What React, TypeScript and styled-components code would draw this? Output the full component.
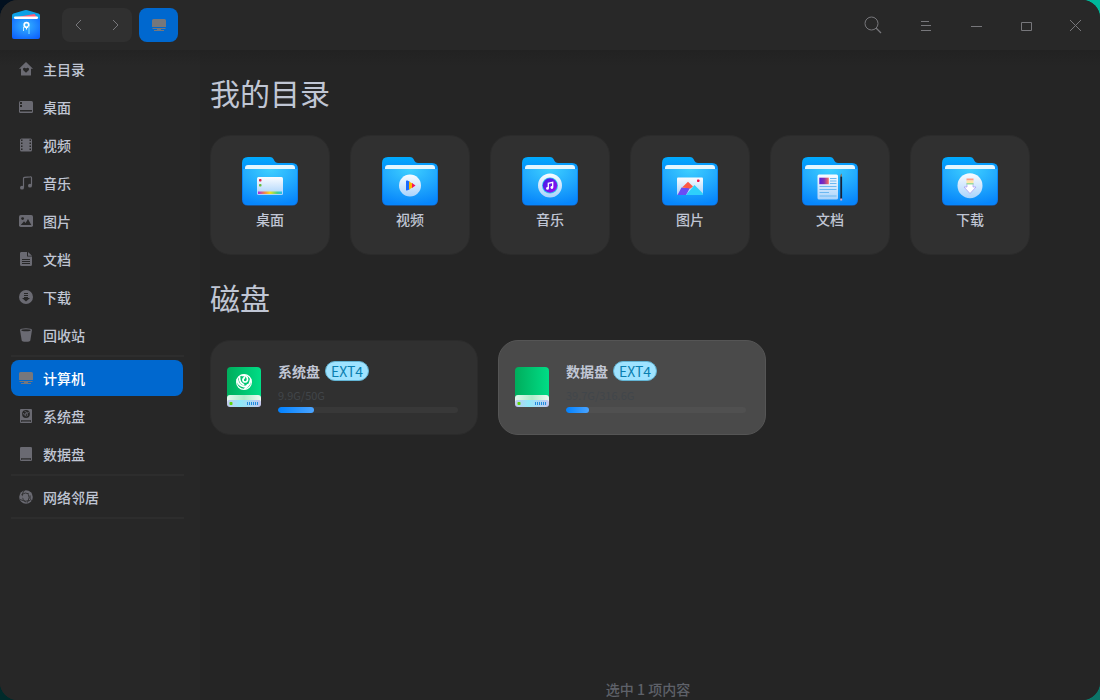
import React, { useId } from "react";
import styled, { createGlobalStyle } from "styled-components";

const GlobalStyle = createGlobalStyle`
  *, *::before, *::after { box-sizing: border-box; }
  body {
    margin: 0;
    background:
      radial-gradient(circle at 0 0, #02101f 0 60px, transparent 61px),
      radial-gradient(circle at 100% 0, #00b89c 0 60px, transparent 61px),
      radial-gradient(circle at 0 100%, #002b2b 0 60px, transparent 61px),
      #0b7468;
    font-family: "Noto Sans CJK SC", "Noto Sans", sans-serif;
    font-size: 14px;
    line-height: 20px;
    color: #c0c6d4;
  }
  button { font: inherit; color: inherit; border: 0; padding: 0; background: none; cursor: pointer; }
  a { color: inherit; text-decoration: none; }
  h2, p, ul { margin: 0; padding: 0; }
  ul { list-style: none; }
  svg { display: block; flex: none; }
`;

const Window = styled.div`
  display: flex;
  flex-direction: column;
  min-height: 100vh;
  overflow: hidden;
  border-radius: 18px;
  background: #252525;
`;

const TitleBar = styled.header`
  display: flex;
  align-items: center;
  height: 50px;
  padding-left: 12px;
  background: #282828;
`;

const NavGroup = styled.div`
  display: flex;
  width: 70px;
  height: 34px;
  margin: 0 7px 0 22px;
  border-radius: 8px;
  background: #303030;
`;

const NavButton = styled.button`
  flex: 1;
  display: grid;
  place-items: center;
`;

const ActiveTab = styled.button`
  display: grid;
  place-items: center;
  width: 39px;
  height: 34px;
  border-radius: 8px;
  background: #0068cf;
`;

const WindowControls = styled.div`
  display: flex;
  margin-left: auto;
`;

const ControlButton = styled.button<{ $wide?: boolean }>`
  display: grid;
  place-items: center;
  width: ${(p) => (p.$wide ? 54 : 50)}px;
  height: 50px;
`;

const Body = styled.div`
  flex: 1;
  display: flex;
  background: linear-gradient(#222222, #252525 16px);
`;

const Sidebar = styled.nav`
  flex: none;
  width: 200px;
  padding: 1px 16px 0 11px;
  background: linear-gradient(#232323, #272727 16px);
`;

const PlaceGroup = styled.ul`
  display: flex;
  flex-direction: column;
  gap: 2px;
  margin-bottom: 3px;
  padding-bottom: 2px;
  border-bottom: 2px solid #2d2d2d;
`;

const PlaceLink = styled.a<{ $active?: boolean }>`
  display: flex;
  align-items: center;
  gap: 10px;
  width: 172px;
  height: 36px;
  padding-left: 8px;
  border-radius: 8px;
  font-weight: 500;
  color: ${(p) => (p.$active ? "#ffffff" : "#c0c6d4")};
  background: ${(p) => (p.$active ? "#0068cf" : "transparent")};
`;

const Main = styled.main`
  flex: 1;
  min-width: 0;
  display: flex;
  flex-direction: column;
  padding: 20px 10px 0;
`;

const SectionTitle = styled.h2`
  font-size: 30px;
  line-height: 44px;
  font-weight: 400;
`;

const CardRow = styled.div`
  display: flex;
  flex-wrap: wrap;
  gap: 20px;
  padding: 21px 0 20px;
`;

const FolderCard = styled.button`
  display: flex;
  flex-direction: column;
  align-items: center;
  gap: 2px;
  width: 120px;
  height: 120px;
  padding-top: 21px;
  border: 1px solid #2b2b2b;
  border-radius: 20px;
  font-weight: 500;
  background: #303030;
`;

const DiskCard = styled.button<{ $selected?: boolean }>`
  display: flex;
  align-items: center;
  gap: 17px;
  width: 268px;
  height: 95px;
  padding: 0 16px 2px;
  text-align: left;
  border: 1px solid ${(p) => (p.$selected ? "#555555" : "#2b2b2b")};
  border-radius: 20px;
  background: ${(p) => (p.$selected ? "#4a4a4a" : "#303030")};
`;

const DiskInfo = styled.div`
  display: flex;
  flex-direction: column;
  width: 180px;
`;

const DiskHeading = styled.div`
  display: flex;
  align-items: center;
  gap: 5px;
  font-weight: 700;
`;

const FormatBadge = styled.span`
  padding: 0 5px;
  border: 1px solid #62b4d4;
  border-radius: 10px;
  line-height: 18px;
  font-weight: 400;
  color: #0a7fb0;
  background: #9fe3ff;
`;

const Usage = styled.span<{ $selected?: boolean }>`
  margin: 6px 0 4px;
  font-size: 11px;
  line-height: 16px;
  color: ${(p) => (p.$selected ? "#41464b" : "#414549")};
`;

const Meter = styled.div<{ $selected?: boolean }>`
  height: 6px;
  border-radius: 3px;
  overflow: hidden;
  background: ${(p) => (p.$selected ? "#505050" : "#383838")};
`;

const MeterFill = styled.div`
  height: 100%;
  border-radius: 3px;
  background: linear-gradient(90deg, #0081ff, #4ba4ff);
`;

const StatusBar = styled.footer`
  margin-top: auto;
  padding: 0 4px 1px 0;
  text-align: center;
  font-weight: 500;
  color: #5e6169;
`;

const GREY = "#6a6a72";

function Logo() {
  return (
    <svg width="28" height="30" viewBox="0 .5 28 30" aria-hidden="true">
      <defs>
        <radialGradient id="logo-front" cx=".5" cy=".4" r=".75">
          <stop offset="0" stopColor="#35b4ff" />
          <stop offset="1" stopColor="#0a5cff" />
        </radialGradient>
      </defs>
      <path d="M0 6Q0 4.500 1.500 4L12.500 .8Q14 .3 15.500 .8L26.500 4Q28 4.500 28 6V12H0Z" fill="#0ba0e6" />
      <path d="M5 7.500L22.500 4.500L25.500 8.500H5Z" fill="#ff5b77" />
      <path d="M0 9H2L2.500 7.500H25.500L26 9H28V27.500Q28 29.500 26 29.500H2Q0 29.500 0 27.500Z" fill="url(#logo-front)" />
      <path d="M2 8Q2 7 3 7H25Q26 7 26 8L25.500 9.500H2.500Z" fill="#fff" />
      <circle cx="14.500" cy="15.500" r="2.300" fill="none" stroke="#fff" strokeWidth="1.700" />
      <path d="M11.500 17.500V21.500" stroke="#c8ecff" strokeWidth="1" />
      <path d="M14.500 18V20" stroke="#fff" strokeWidth="1" />
      <path d="M17 17V24.500" stroke="#62c4ff" strokeWidth="1.600" />
    </svg>
  );
}

function SmallIcon({ children }: { children: React.ReactNode }) {
  return (
    <svg width="14" height="14" viewBox="0 0 14 14" fill={GREY} aria-hidden="true">
      {children}
    </svg>
  );
}

const cut = "#272727";

const icons = {
  home: (
    <SmallIcon>
      <path fillRule="evenodd" d="M7 0L14 6.700H12V13Q12 13.500 11.500 13.500H2.500Q2 13.500 2 13V6.700H0ZM7 10.800L9.700 8.200Q10.500 7 9.500 6.100Q8.200 5.200 7 6.500Q5.800 5.200 4.500 6.100Q3.500 7 4.300 8.200Z" />
    </SmallIcon>
  ),
  desktop: (
    <SmallIcon>
      <rect y="1" width="14" height="12" rx="1.500" />
      <path d="M1 2H3V4H1ZM1 5H3V7H1ZM1 10H13V11.500H1Z" fill={cut} />
    </SmallIcon>
  ),
  video: (
    <SmallIcon>
      <rect x="1" y=".5" width="12" height="13" rx="1.500" />
      <path d="M2 1.500H3.500V3H2ZM2 4.500H3.500V6H2ZM2 7.500H3.500V9H2ZM2 10.500H3.500V12H2ZM10.500 1.500H12V3H10.500ZM10.500 4.500H12V6H10.500ZM10.500 7.500H12V9H10.500ZM10.500 10.500H12V12H10.500Z" fill={cut} />
    </SmallIcon>
  ),
  music: (
    <SmallIcon>
      <path d="M4.500 11.500V2.500Q4.500 1.600 5.500 1.400L11 .8Q12.500 .6 12.500 1.800V9.500" fill="none" stroke={GREY} strokeWidth="1.200" />
      <ellipse cx="3" cy="11.700" rx="2" ry="1.900" />
      <ellipse cx="11" cy="9.700" rx="2" ry="1.900" />
    </SmallIcon>
  ),
  picture: (
    <SmallIcon>
      <rect y="1" width="14" height="12" rx="1.800" />
      <circle cx="3.600" cy="4.600" r="1.400" fill={cut} />
      <path d="M1.800 11L5 7.200L6.600 9L9 5L12.300 11Z" fill={cut} />
    </SmallIcon>
  ),
  document: (
    <SmallIcon>
      <path d="M2 0H8V4.500H13V12.500Q13 14 11.500 14H2.500Q1 14 1 12.500V1.500Q1 0 2 0ZM9 0L13 3.700H9Z" />
      <path d="M3 7H11V8H3ZM3 9H11V10H3ZM3 11H11V12H3Z" fill={cut} />
    </SmallIcon>
  ),
  download: (
    <SmallIcon>
      <circle cx="7" cy="7" r="7" />
      <path d="M5 3H9V4H5ZM5 5H9V6H5ZM5 7H9V8H11L7 11.500L3 8H5Z" fill={cut} />
    </SmallIcon>
  ),
  trash: (
    <SmallIcon>
      <path d="M1 2Q1 .3 7 .3Q13 .3 13 2L11.300 12.500Q11 13.800 7 13.800Q3 13.800 2.700 12.500Z" />
      <ellipse cx="7" cy="2.300" rx="4.700" ry="1" fill={cut} />
    </SmallIcon>
  ),
  computer: (
    <svg width="14" height="14" viewBox="0 0 14 14" fill="#77777b" aria-hidden="true">
      <path d="M1.500 1H12.500Q14 1 14 2.500V9H0V2.500Q0 1 1.500 1ZM0 10H14L13 11H1ZM5 11H9V12H5ZM2 12H12V13H2Z" />
    </svg>
  ),
  systemDisk: (
    <SmallIcon>
      <path d="M2 0H12Q13 0 13 1V13Q13 14 12 14H2Q1 14 1 13V1Q1 0 2 0Z" />
      <rect x="2" y="11" width="10" height="2" rx="1" fill={cut} />
      <rect x="3" y="11.700" width="8" height=".8" />
      <circle cx="7" cy="5" r="3.900" fill={cut} />
      <path d="M4.300 4Q5 6.500 7.500 7.200M5.500 2.200Q8.800 2.500 8.500 6.800M7 4.300Q9.500 4.500 9.700 2.800M6.300 4L6.500 6" fill="none" stroke={GREY} strokeWidth=".8" />
    </SmallIcon>
  ),
  dataDisk: (
    <SmallIcon>
      <rect x="1" width="12" height="14" rx="1.300" />
      <rect x="2" y="11" width="10" height="2" rx="1" fill={cut} />
      <rect x="3" y="11.700" width="8" height=".8" />
    </SmallIcon>
  ),
  network: (
    <SmallIcon>
      <circle cx="7" cy="7" r="6.800" />
      <path d="M5.500 0Q0 7 7 12.500M2.500 4.500Q6 1.500 11.500 4.500M1 9.500Q6 12.500 11 10.500M9 3Q11.500 7.500 8.500 12.500M11 4.500Q10.500 9 12.500 11" fill="none" stroke={cut} strokeWidth=".8" />
      <circle cx="11" cy="4" r="1.500" />
      <circle cx="2.500" cy="7" r="1.500" />
    </SmallIcon>
  ),
};

type IconName = keyof typeof icons;

const emblems = {
  desktop: (id: string) => (
    <>
      <rect x="15" y="20" width="26" height="18" rx="1.500" fill={`url(#${id}-paper)`} />
      <rect x="16" y="34.500" width="24" height="2.500" fill={`url(#${id}-rainbow)`} />
      <rect x="17" y="22" width="2.500" height="2.500" rx=".7" fill="#e0264b" />
      <rect x="17" y="27" width="2.500" height="2.500" rx=".7" fill="#69bd3d" />
    </>
  ),
  video: (id: string) => (
    <>
      <circle cx="28" cy="28.500" r="11" fill={`url(#${id}-paper)`} />
      <path d="M24.500 23.500H25.500L27.500 24.500V32.500L25 33.500Q24 33.500 24 33V24Z" fill="#1b6bff" />
      <path d="M27 24.500L30.500 26.500V30.500L27 32.500Z" fill="#ffb400" />
      <path d="M30 26L33.500 28.500L30 31Z" fill="#f5115e" />
    </>
  ),
  music: (id: string) => (
    <>
      <circle cx="28" cy="28.500" r="12" fill={`url(#${id}-paper)`} />
      <circle cx="28" cy="28.500" r="8" fill="#29c5ee" />
      <circle cx="28" cy="28.500" r="7.200" fill={`url(#${id}-violet)`} />
      <path d="M26.300 31V26.300L30.700 25.300V30" fill="none" stroke="#fff" strokeWidth="1.300" />
      <circle cx="25.500" cy="31.400" r="1.400" fill="#fff" />
      <circle cx="29.900" cy="30.500" r="1.400" fill="#fff" />
    </>
  ),
  picture: (id: string) => (
    <>
      <rect x="15" y="20.500" width="26" height="17.500" rx="1" fill={`url(#${id}-paper)`} />
      <path d="M15.500 38L19.500 30.500L24.500 31L29 29L24 38Z" fill="#6a4cf5" />
      <path d="M20 30.500L26 24.800L31 29.500L28.500 31.500Z" fill="#ff5a45" />
      <path d="M24 38L32.500 28L41 36.500V38Z" fill="#2ed0fb" />
      <rect x="35" y="22.500" width="2.500" height="2.500" rx=".7" fill="#f0154f" />
    </>
  ),
  document: (id: string) => (
    <>
      <rect x="15.500" y="17.500" width="20.500" height="25" rx="1.500" fill={`url(#${id}-paper)`} />
      <rect x="17.300" y="20.700" width="9.500" height="6.500" fill={`url(#${id}-photo)`} />
      <path d="M28 21.500H34.500M28 24H34.500M28 26.500H34.500M17.500 29.500H34.500M17.500 32.500H34.500M17.500 35.500H27M17.500 39H34.500" stroke="#6bb8f2" />
      <path d="M38.300 20L39.200 16.500L40.100 20V42H38.300Z" fill="#17233a" />
      <path d="M38.300 19.500L39.200 16.500L40.100 19.500Z" fill="#ad9166" />
      <rect x="38.300" y="41.500" width="1.800" height="2" fill="#e9a8bd" />
    </>
  ),
  download: (id: string) => (
    <>
      <circle cx="28" cy="28.700" r="12.500" fill={`url(#${id}-paper)`} />
      <path d="M25 26.500H31V30H34L28 36.500L22 30H25Z" fill="#fff" stroke="#a08cf0" strokeWidth=".6" />
      <rect x="24.500" y="21.500" width="7" height="2" fill="#ff9d86" />
      <rect x="24.500" y="23.500" width="7" height="2.500" fill="#ffe5a5" />
      <rect x="24.500" y="26" width="7" height="1.500" fill="#9bdc9b" />
    </>
  ),
};

type EmblemName = keyof typeof emblems;

function FolderIcon({ emblem }: { emblem: EmblemName }) {
  const id = "folder" + useId().replace(/[^a-zA-Z0-9]/g, "");
  return (
    <svg width="56" height="50" viewBox="0 0 56 50" aria-hidden="true">
      <defs>
        <linearGradient id={`${id}-back`} x1="0" y1="0" x2="0" y2="1">
          <stop offset="0" stopColor="#00abff" />
          <stop offset=".3" stopColor="#0a8cf8" />
          <stop offset="1" stopColor="#0a70e8" />
        </linearGradient>
        <radialGradient id={`${id}-front`} cx=".5" cy="0" r="1">
          <stop offset="0" stopColor="#3fd0ff" />
          <stop offset="1" stopColor="#0786fb" />
        </radialGradient>
        <linearGradient id={`${id}-paper`} x1="0" y1="0" x2="0" y2="1">
          <stop offset="0" stopColor="#fafcff" />
          <stop offset="1" stopColor="#a9d3fb" />
        </linearGradient>
        <linearGradient id={`${id}-rainbow`}>
          <stop offset="0" stopColor="#a52ae8" />
          <stop offset=".25" stopColor="#f27a52" />
          <stop offset=".5" stopColor="#f3e21d" />
          <stop offset=".8" stopColor="#41d18e" />
          <stop offset="1" stopColor="#22bdf5" />
        </linearGradient>
        <linearGradient id={`${id}-violet`} x1="0" y1="0" x2="1" y2="1">
          <stop offset="0" stopColor="#3a20e8" />
          <stop offset="1" stopColor="#a00cf0" />
        </linearGradient>
        <linearGradient id={`${id}-photo`}>
          <stop offset="0" stopColor="#5a1ee0" />
          <stop offset=".5" stopColor="#8330b0" />
          <stop offset="1" stopColor="#ff7060" />
        </linearGradient>
      </defs>
      <path d="M6 0H28Q30.500 0 31.500 2L32.500 4Q33.500 6 36 6H50Q56 6 56 12V42.500Q56 48.500 50 48.500H6Q0 48.500 0 42.500V6Q0 0 6 0Z" fill={`url(#${id}-back)`} />
      <path d="M1 12H55V42Q55 48 49.500 48H6.500Q1 48 1 42Z" fill={`url(#${id}-front)`} />
      <path d="M3 12V11Q3 8 6 8H50Q53 8 53 11V12Z" fill="#e2f6ff" />
      {emblems[emblem](id)}
    </svg>
  );
}

function DiskIcon({ system }: { system?: boolean }) {
  const id = "disk" + useId().replace(/[^a-zA-Z0-9]/g, "");
  return (
    <svg width="34" height="40" viewBox="0 0 34 40" aria-hidden="true">
      <defs>
        <linearGradient id={`${id}-body`}>
          <stop offset="0" stopColor="#00ad5c" />
          <stop offset="1" stopColor="#00dd86" />
        </linearGradient>
        <linearGradient id={`${id}-rim`}>
          <stop offset="0" stopColor="#e5f8ee" />
          <stop offset=".5" stopColor="#aeecca" />
          <stop offset="1" stopColor="#eefaf3" />
        </linearGradient>
        <linearGradient id={`${id}-base`}>
          <stop offset="0" stopColor="#c3c8ee" />
          <stop offset=".4" stopColor="#8feafa" />
          <stop offset="1" stopColor="#c6c6ee" />
        </linearGradient>
      </defs>
      <path d="M4 0H30Q34 0 34 4V34H0V4Q0 0 4 0Z" fill={`url(#${id}-body)`} />
      <path d="M0 31Q0 28 3 28H31Q34 28 34 31V36H0Z" fill={`url(#${id}-rim)`} />
      <path d="M0 36Q0 33 2 33H32Q34 33 34 36V37Q34 40 31 40H3Q0 40 0 37Z" fill={`url(#${id}-base)`} />
      <rect x="2.500" y="35" width="3" height="3" rx=".8" fill="#5fd608" />
      <path d="M20.500 35V38M22.500 35V38M24.500 35V38M26.500 35V38M28.500 35V38M30.500 35V38" stroke="#218de0" />
      {system && (
        <g fill="none" stroke="#fff" strokeLinecap="round">
          <circle cx="17" cy="15" r="7.400" strokeWidth="1.200" />
          <path d="M10.500 13Q11 18.500 17 19.500Q20 20 20.500 18" strokeWidth="2" />
          <path d="M12.500 10.500Q12.500 16 16.500 17.500" strokeWidth="1.800" />
          <path d="M15 8.500Q21 8 20.500 13Q19.500 16 16.500 14.500Q15 12.500 17.500 10.500" strokeWidth="1.700" />
          <path d="M23.500 13Q23 18 18 21.500" strokeWidth="1.800" />
        </g>
      )}
    </svg>
  );
}

function LineIcon({ d }: { d: string }) {
  return (
    <svg width="14" height="14" viewBox="0 0 14 14" fill="none" stroke="#77777b" aria-hidden="true">
      <path d={d} />
    </svg>
  );
}

const placeGroups: { icon: IconName; label: string }[][] = [
  [
    { icon: "home", label: "主目录" },
    { icon: "desktop", label: "桌面" },
    { icon: "video", label: "视频" },
    { icon: "music", label: "音乐" },
    { icon: "picture", label: "图片" },
    { icon: "document", label: "文档" },
    { icon: "download", label: "下载" },
    { icon: "trash", label: "回收站" },
  ],
  [
    { icon: "computer", label: "计算机" },
    { icon: "systemDisk", label: "系统盘" },
    { icon: "dataDisk", label: "数据盘" },
  ],
  [{ icon: "network", label: "网络邻居" }],
];

const folders: { emblem: EmblemName; label: string }[] = [
  { emblem: "desktop", label: "桌面" },
  { emblem: "video", label: "视频" },
  { emblem: "music", label: "音乐" },
  { emblem: "picture", label: "图片" },
  { emblem: "document", label: "文档" },
  { emblem: "download", label: "下载" },
];

const disks = [
  { name: "系统盘", format: "EXT4", used: 9.9, total: 50, system: true, selected: false },
  { name: "数据盘", format: "EXT4", used: 39.7, total: 316.6, system: false, selected: true },
];

export default function App() {
  return (
    <>
      <GlobalStyle />
      <Window>
        <TitleBar>
          <Logo />
          <NavGroup>
            <NavButton aria-label="后退">
              <LineIcon d="M8 2L3 7L8 12" />
            </NavButton>
            <NavButton aria-label="前进">
              <LineIcon d="M5 2L10 7L5 12" />
            </NavButton>
          </NavGroup>
          <ActiveTab aria-label="计算机">{icons.computer}</ActiveTab>
          <WindowControls>
            <ControlButton $wide aria-label="搜索">
              <svg width="18" height="18" viewBox="0 0 18 18" fill="none" stroke="#77777b" aria-hidden="true">
                <circle cx="7.500" cy="7.500" r="6.500" />
                <path d="M12 12L17 17" strokeWidth="1.200" />
              </svg>
            </ControlButton>
            <ControlButton aria-label="菜单">
              <LineIcon d="M3 3.500H11M3 7.500H13M3 12.500H13" />
            </ControlButton>
            <ControlButton aria-label="最小化">
              <LineIcon d="M3 8.500H14" />
            </ControlButton>
            <ControlButton aria-label="最大化">
              <LineIcon d="M3.500 4.500H13.500V12.500H3.500Z" />
            </ControlButton>
            <ControlButton aria-label="关闭">
              <LineIcon d="M2 2L13 13M13 2L2 13" />
            </ControlButton>
          </WindowControls>
        </TitleBar>
        <Body>
          <Sidebar>
            {placeGroups.map((group) => (
              <PlaceGroup key={group[0].label}>
                {group.map((place) => (
                  <li key={place.label}>
                    <PlaceLink href="#" $active={place.icon === "computer"}>
                      {icons[place.icon]}
                      {place.label}
                    </PlaceLink>
                  </li>
                ))}
              </PlaceGroup>
            ))}
          </Sidebar>
          <Main>
            <SectionTitle>我的目录</SectionTitle>
            <CardRow>
              {folders.map((folder) => (
                <FolderCard key={folder.label}>
                  <FolderIcon emblem={folder.emblem} />
                  {folder.label}
                </FolderCard>
              ))}
            </CardRow>
            <SectionTitle>磁盘</SectionTitle>
            <CardRow>
              {disks.map((disk) => (
                <DiskCard key={disk.name} $selected={disk.selected}>
                  <DiskIcon system={disk.system} />
                  <DiskInfo>
                    <DiskHeading>
                      {disk.name}
                      <FormatBadge>{disk.format}</FormatBadge>
                    </DiskHeading>
                    <Usage $selected={disk.selected}>{`${disk.used}G/${disk.total}G`}</Usage>
                    <Meter
                      $selected={disk.selected}
                      role="meter"
                      aria-label={disk.name}
                      aria-valuenow={disk.used}
                      aria-valuemin={0}
                      aria-valuemax={disk.total}
                    >
                      <MeterFill style={{ width: `${(disk.used / disk.total) * 100}%` }} />
                    </Meter>
                  </DiskInfo>
                </DiskCard>
              ))}
            </CardRow>
            <StatusBar>选中 1 项内容</StatusBar>
          </Main>
        </Body>
      </Window>
    </>
  );
}
